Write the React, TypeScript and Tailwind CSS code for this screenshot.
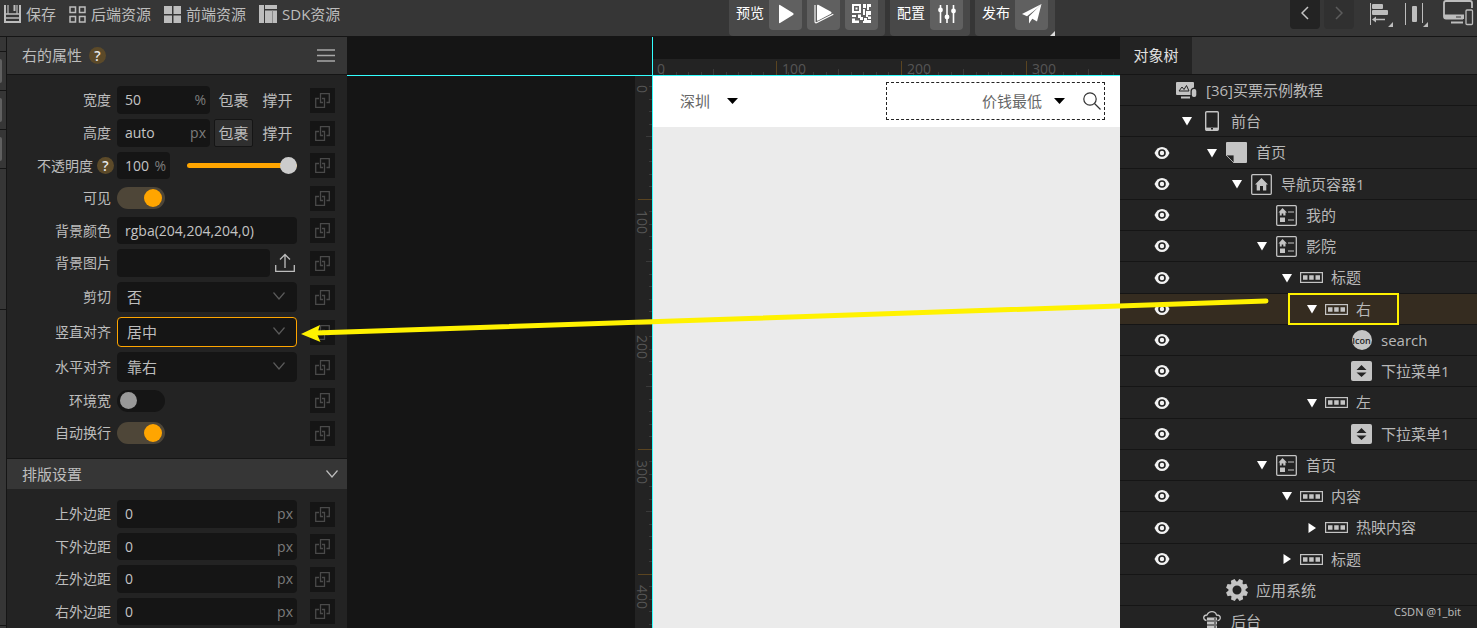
import { useState } from "react";
import type { ReactNode } from "react";
import clsx from "clsx";

type IconProps = { className?: string };

/* ---------- toolbar icons ---------- */

const SaveIcon = () => (
  <svg viewBox="0 0 17 18" className="h-[18px] w-[17px]" fill="none" stroke="currentColor">
    <path d="M1 0V17H16V0" strokeWidth="2" />
    <path d="M1 9H16M1 13H16" strokeWidth="1.500" />
    <path d="M4 0V9M13 0V9" strokeWidth="1.200" />
    <path d="M10.500 0V6" strokeWidth="2" />
  </svg>
);

const GridOutlineIcon = () => (
  <svg viewBox="0 0 17 17" className="size-[17px]" fill="none" stroke="currentColor" strokeWidth="1.5">
    <rect x="1" y="1" width="5.5" height="5.5" />
    <rect x="10.5" y="1" width="5.5" height="5.5" />
    <rect x="1" y="10.5" width="5.5" height="5.5" />
    <rect x="10.5" y="10.5" width="5.5" height="5.5" />
  </svg>
);

const GridSolidIcon = () => (
  <svg viewBox="0 0 17 17" className="size-[17px]" fill="currentColor">
    <path d="M0 0h8v8H0zM9.500 0H17v8H9.500zM0 9.500h8V17H0zM9.500 9.500H17V17H9.500z" />
  </svg>
);

const SdkIcon = () => (
  <svg viewBox="0 0 18 18" className="size-[18px]" fill="currentColor">
    <path d="M0 0h5v18H0zM6 0h12v4H6zM6 5.500h12V18H6z" />
    <path d="M13.500 5.500V18" stroke="#8a8a8a" />
  </svg>
);

const PlayIcon = () => (
  <svg viewBox="0 0 18 20" className="h-5 w-[18px]" fill="currentColor">
    <path d="M2 1.500Q2 .5 3 1L16 9Q17.500 10 16 11L3 19Q2 19.500 2 18.500z" />
  </svg>
);

const PlayStackIcon = () => (
  <svg viewBox="0 0 20 20" className="size-5" fill="none" stroke="currentColor">
    <path d="M3 1.500Q3 .3 4.200 .8L17 7.800Q18.300 8.800 17 9.800L4.200 16.500Q3 17 3 15.800z" fill="currentColor" stroke="none" />
    <path d="M1 1V17.500Q1 19.200 2.500 18.800L19.300 10.200" strokeWidth="1.100" />
  </svg>
);

const QrIcon = () => (
  <svg viewBox="0 0 19 19" className="size-[19px]" fill="currentColor">
    <path fillRule="evenodd" d="M0 0h9v9H0zM2 2v5h5V2z" />
    <path d="M3.500 3.500h2v2h-2zM11 0h3v4h-3zM15 0h4v3h-2v3h-2zM11 5h2v6h-2zM14 7h5v4h-3v2h-2zM0 11h4v2H0zM6 10.500h3V13h2v3H8v-2H6zM0 14.500h3v2h4V19H0zM12 14h3v2h4v3h-8v-2h1zM16 12.500h3V15h-3z" />
  </svg>
);

const SlidersIcon = () => (
  <svg viewBox="0 0 18 18" className="size-[18px]" fill="currentColor" stroke="currentColor" strokeWidth="1.600">
    <path d="M2.500 0V18M9 0V18M15.500 0V18" />
    <circle cx="2.500" cy="5" r="1.600" />
    <circle cx="9" cy="12" r="1.600" />
    <circle cx="15.500" cy="6" r="1.600" />
  </svg>
);

const PlaneIcon = () => (
  <svg viewBox="0 0 20 20" className="size-5" fill="currentColor">
    <path d="M19.500 0L0 10l5 2.200L15.500 4z" />
    <path d="M19.500 0L7 12.500V19.500l3.300-4.800L15 17.500z" />
  </svg>
);

const AlignIcon = () => (
  <svg viewBox="0 0 24 26" className="h-[26px] w-6" fill="currentColor">
    <path d="M0 2h1v22H0z" />
    <rect x="2" y="3" width="11" height="5" rx="1" />
    <rect x="2" y="9" width="16" height="5" rx="1" />
    <path d="M2 18.500l4-3v2.300h9v1.500H6v2.200zM23 21v5h-5z" />
  </svg>
);

const DistributeIcon = () => (
  <svg viewBox="0 0 24 26" className="h-[26px] w-6" fill="currentColor">
    <path d="M0 2h1v22H0zM17 2h1v20h-1z" />
    <rect x="7" y="5" width="5" height="16" rx="1" />
    <path d="M23 21v5h-5z" />
  </svg>
);

const DevicesIcon = () => (
  <svg viewBox="0 0 32 26" className="h-[26px] w-8" fill="none" stroke="currentColor">
    <path d="M20 18.500H3Q1 18.500 1 16.500V3Q1 1 3 1H27Q29 1 29 3V8" strokeWidth="1.800" />
    <path d="M1 14.500H21V19H1z" fill="currentColor" stroke="none" />
    <path d="M13 17h5" stroke="#363636" />
    <path d="M8 22.500H20" strokeWidth="2" />
    <rect x="23" y="10" width="6.500" height="14.500" rx="1" strokeWidth="1.300" />
  </svg>
);

/* ---------- panel icons ---------- */

const LinkIcon = () => (
  <svg viewBox="0 0 15 15" className="size-[15px]" fill="none" stroke="currentColor" strokeWidth="1.300">
    <path d="M4 5.500H.7V14.300H9.500V5.500H7" />
    <path d="M8 9.500H5.500V.7H14.300V9.500H11.500" />
  </svg>
);

const ChevronDown = ({ className }: IconProps) => (
  <svg viewBox="0 0 12 8" className={className} fill="none" stroke="currentColor" strokeWidth="1.200">
    <path d="M.5 .5L6 7L11.500 .5" />
  </svg>
);

const UploadIcon = () => (
  <svg viewBox="0 0 20 20" className="size-5" fill="none" stroke="currentColor" strokeWidth="1.300">
    <path d="M.7 12V18.300H19.300V12M10 15V1.500M5 6.500L10 1.500L15 6.500" />
  </svg>
);

const Help = () => (
  <button
    type="button"
    aria-label="帮助"
    className="flex size-[17px] shrink-0 items-center justify-center rounded-full bg-[#5c4a29] text-sm leading-none font-semibold text-[#e8e8e8]"
  >
    ?
  </button>
);

/* ---------- tree icons ---------- */

const EyeIcon = () => (
  <svg viewBox="0 0 16 12" className="h-3 w-4">
    <path d="M8 0Q13 0 15.500 6Q13 12 8 12Q3 12 .5 6Q3 0 8 0z" fill="#f2f2f2" />
    <circle cx="8" cy="6" r="3" fill="#f2f2f2" stroke="#232323" strokeWidth="1.600" />
  </svg>
);

const ProjectIcon = () => (
  <svg viewBox="0 0 21 17" className="h-[17px] w-[21px]" fill="currentColor">
    <path d="M1 0H17Q18 0 18 1V5.500Q14.500 6 14.500 9V13H1Q0 13 0 12V1Q0 0 1 0z" />
    <path d="M3 9L6 5L8 7.500L10.500 3.500L13 9z" fill="none" stroke="#232323" />
    <path d="M5 14.500H14V16.500H5z" />
    <rect x="15.800" y="7" width="4.500" height="8" rx="2" />
  </svg>
);

const PhoneIcon = () => (
  <svg viewBox="0 0 14 20" className="h-5 w-3.5" fill="none" stroke="currentColor">
    <rect x=".7" y=".7" width="12.600" height="18.600" rx="1" strokeWidth="1.400" />
    <path d="M1 17.800H13" strokeWidth="2.400" />
    <path d="M6 17.800H8" stroke="#232323" strokeWidth="1.500" />
  </svg>
);

const PageIcon = () => (
  <svg viewBox="0 0 21 21" className="size-[21px]" fill="currentColor">
    <path d="M1 0H20Q21 0 21 1V20Q21 21 20 21H8V13H0V1Q0 0 1 0z" />
    <path d="M1 13.500L8 20.500V13z" fill="#232323" />
    <path d="M0 13L8 21V13z" fill="none" stroke="currentColor" strokeWidth=".8" />
  </svg>
);

const NavIcon = () => (
  <svg viewBox="0 0 21 21" className="size-[21px]" fill="currentColor">
    <rect x=".7" y=".7" width="19.600" height="19.600" rx="1" fill="none" stroke="currentColor" strokeWidth="1.300" />
    <path d="M10.500 4L17 10.500H15.300V16.500H12V12H9V16.500H5.700V10.500H4z" />
  </svg>
);

const NavPageIcon = () => (
  <svg viewBox="0 0 21 21" className="size-[21px]" fill="currentColor">
    <rect x=".7" y=".7" width="19.600" height="19.600" rx="1" fill="none" stroke="currentColor" strokeWidth="1.300" />
    <path d="M6.500 3L11 7.500H9.500V10.500H7.300V8.500H5.700V10.500H3.800V7.500H2.500zM4 12.500H9V17H4z" />
    <path d="M12 7H18M12 15H18" stroke="#8f8f8f" strokeWidth="1.300" />
  </svg>
);

const RowIcon = () => (
  <svg viewBox="0 0 23 11" className="h-[11px] w-[23px]" fill="currentColor">
    <rect x=".6" y=".6" width="21.800" height="9.800" fill="none" stroke="currentColor" strokeWidth="1.200" />
    <path d="M3 3.300H7.500V7.700H3zM9.200 3.300H13.700V7.700H9.200zM15.500 3.300H20V7.700H15.500z" />
  </svg>
);

const IconIcon = () => (
  <span className="flex size-5 items-center justify-center rounded-full bg-[#c4c4c4] text-[9px] leading-none font-semibold text-[#232323]">
    Icon
  </span>
);

const SelectIcon = () => (
  <svg viewBox="0 0 21 20" className="h-5 w-[21px]">
    <rect width="21" height="20" rx="2" fill="currentColor" />
    <path d="M10.500 4L15.500 9H5.500zM10.500 16L15.500 11.500H5.500z" fill="#232323" />
  </svg>
);

const GearIcon = () => (
  <svg viewBox="0 0 22 22" className="size-[22px]">
    <circle cx="11" cy="11" r="6.500" fill="none" stroke="currentColor" strokeWidth="4" />
    {[22, 67, 112, 157, 202, 247, 292, 337].map((a) => (
      <path key={a} d="M8.200 3.500L9 0H13L13.800 3.500z" fill="currentColor" transform={`rotate(${a} 11 11)`} />
    ))}
  </svg>
);

const ServerIcon = () => (
  <svg viewBox="0 0 18 20" className="h-5 w-[18px]" fill="none" stroke="currentColor">
    <path d="M3.500 9.500Q.7 9 .7 6.500Q1 4 4 4Q5.500 .7 9 .7Q12.500 .7 13.500 4Q17.300 4 17.300 7Q17 9.500 14.500 9.500" strokeWidth="1.300" />
    <path d="M4 8H14M4 12H14M4 16H14" strokeWidth="3" />
    <path d="M11 8h2M11 12h2M11 16h2" stroke="#232323" />
  </svg>
);

/* ---------- toolbar ---------- */

const ResourceButton = ({ icon, label }: { icon: ReactNode; label: string }) => (
  <button type="button" className="flex items-center gap-[5px] whitespace-nowrap">
    {icon}
    {label}
  </button>
);

const ToolGroup = ({ label, children }: { label: string; children: ReactNode }) => (
  <div className="flex h-full items-start gap-[5px] rounded-b-sm bg-[#484848] px-[7px] text-white">
    <span className="text-sm leading-[26px] whitespace-nowrap">{label}</span>
    {children}
  </div>
);

const ToolButton = ({ label, children }: { label: string; children: ReactNode }) => (
  <button
    type="button"
    aria-label={label}
    className="flex h-[30px] w-[33px] items-center justify-center rounded-b-sm bg-[#606060] pb-[3px]"
  >
    {children}
  </button>
);

const Toolbar = () => (
  <header className="flex h-[37px] shrink-0 border-b border-[#151515] bg-[#363636] text-[#bdbdbd]">
    <div className="flex flex-1 items-center gap-[13px] pb-2 pl-1 text-[15px]">
      <ResourceButton icon={<SaveIcon />} label="保存" />
      <ResourceButton icon={<GridOutlineIcon />} label="后端资源" />
      <ResourceButton icon={<GridSolidIcon />} label="前端资源" />
      <ResourceButton icon={<SdkIcon />} label="SDK资源" />
    </div>
    <div className="relative flex gap-[5px]">
      <ToolGroup label="预览">
        <ToolButton label="播放"><PlayIcon /></ToolButton>
        <ToolButton label="连续播放"><PlayStackIcon /></ToolButton>
        <ToolButton label="二维码"><QrIcon /></ToolButton>
      </ToolGroup>
      <ToolGroup label="配置">
        <ToolButton label="设置"><SlidersIcon /></ToolButton>
      </ToolGroup>
      <ToolGroup label="发布">
        <ToolButton label="发送"><PlaneIcon /></ToolButton>
      </ToolGroup>
      <svg viewBox="0 0 5 5" className="absolute right-0 bottom-0 size-[5px]" fill="#dddddd">
        <path d="M5 0V5H0z" />
      </svg>
    </div>
    <div className="flex w-[422px] items-start justify-end pr-0.5">
      <button type="button" aria-label="后退" className="mr-1 flex h-[29px] w-[30px] items-center justify-center rounded-b-sm bg-[#232323] pb-1">
        <svg viewBox="0 0 8 14" className="h-3.5 w-2" fill="none" stroke="#c4c4c4" strokeWidth="1.500">
          <path d="M7 1L1 7L7 13" />
        </svg>
      </button>
      <button type="button" aria-label="前进" className="mr-4 flex h-[29px] w-[30px] items-center justify-center rounded-b-sm bg-[#303030] pb-1">
        <svg viewBox="0 0 8 14" className="h-3.5 w-2" fill="none" stroke="#5c5c5c" strokeWidth="1.500">
          <path d="M1 1L7 7L1 13" />
        </svg>
      </button>
      <button type="button" aria-label="对齐" className="mr-[11px] pt-px"><AlignIcon /></button>
      <button type="button" aria-label="分布" className="mr-3.5 pt-px"><DistributeIcon /></button>
      <button type="button" aria-label="设备"><DevicesIcon /></button>
    </div>
  </header>
);

/* ---------- property panel ---------- */

type PropertyRowProps = {
  id: string;
  label: string;
  help?: boolean;
  height?: string;
  children: ReactNode;
};

const PropertyRow = ({ id, label, help, height = "h-7", children }: PropertyRowProps) => (
  <div className={clsx("flex items-center", height)}>
    <div className={clsx("flex w-[110px] shrink-0 items-center justify-end gap-1", help ? "pr-[3px]" : "pr-1.5")}>
      <label htmlFor={id} className="text-sm whitespace-nowrap">{label}</label>
      {help && <Help />}
    </div>
    <div className="flex h-full min-w-0 flex-1 items-center">{children}</div>
    <button
      type="button"
      aria-label={`绑定${label}`}
      className="mr-3 ml-[13px] flex size-[25px] shrink-0 items-center justify-center bg-[#151515] text-[#4a4a4a]"
    >
      <LinkIcon />
    </button>
  </div>
);

const TextField = ({ id, value, unit, width = "flex-1" }: { id: string; value: string; unit?: string; width?: string }) => (
  <div className={clsx("flex h-full min-w-0 items-center rounded-sm bg-[#151515] pr-1 pl-2", width)}>
    <input id={id} defaultValue={value} className="w-full min-w-0 flex-1 bg-transparent text-sm text-[#c4c4c4] outline-none" />
    {unit && <span className="text-sm text-[#7c7c7c]">{unit}</span>}
  </div>
);

const SizeButtons = ({ wrapActive }: { wrapActive?: boolean }) => (
  <div className="ml-1 flex h-full shrink-0 gap-[5px] text-[15px]">
    <button
      type="button"
      className={clsx("w-[39px] rounded-xs border", wrapActive ? "border-[#151515] bg-[#2f2f2f]" : "border-transparent")}
    >
      包裹
    </button>
    <button type="button" className="w-[39px]">撑开</button>
  </div>
);

const SelectField = ({ id, options, active }: { id: string; options: string[]; active?: boolean }) => (
  <div className="relative h-full flex-1">
    <select
      id={id}
      className={clsx(
        "h-full w-full appearance-none rounded-sm border bg-[#151515] pl-[9px] text-[15px] outline-none",
        active ? "border-[#ffa500]" : "border-[#151515]"
      )}
    >
      {options.map((o) => (
        <option key={o}>{o}</option>
      ))}
    </select>
    <ChevronDown className="pointer-events-none absolute top-[10px] right-3 h-2 w-3 text-[#5a5a5a]" />
  </div>
);

const Switch = ({ id, on }: { id: string; on?: boolean }) => (
  <input
    id={id}
    type="checkbox"
    role="switch"
    defaultChecked={on}
    className="flex h-[22px] w-12 appearance-none items-center rounded-full bg-[#151515] px-[3px] before:size-[17px] before:rounded-full before:bg-[#999999] checked:justify-end checked:bg-[#4e4638] checked:before:size-[18px] checked:before:bg-[#ffa500]"
  />
);

const margins = [
  { id: "margin-top", label: "上外边距" },
  { id: "margin-bottom", label: "下外边距" },
  { id: "margin-left", label: "左外边距" },
  { id: "margin-right", label: "右外边距" },
];

const PropertyPanel = () => {
  const [opacity, setOpacity] = useState(100);

  return (
    <aside className="w-[340px] shrink-0 bg-[#232323] text-[#bdbdbd]">
      <div className="flex h-[38px] items-center gap-[7px] border-b border-[#151515] bg-[#363636] pr-3 pl-[15px]">
        <h2 className="text-[15px]">右的属性</h2>
        <Help />
        <button type="button" aria-label="菜单" className="ml-auto">
          <svg viewBox="0 0 18 13" className="h-[13px] w-[18px]" stroke="#a8a8a8" strokeWidth="1.300">
            <path d="M0 1H18M0 6.500H18M0 12H18" />
          </svg>
        </button>
      </div>
      <div className="flex flex-col gap-[5px] py-[11px]">
        <PropertyRow id="width" label="宽度">
          <TextField id="width" value="50" unit="%" />
          <SizeButtons />
        </PropertyRow>
        <PropertyRow id="height" label="高度">
          <TextField id="height" value="auto" unit="px" />
          <SizeButtons wrapActive />
        </PropertyRow>
        <PropertyRow id="opacity" label="不透明度" help height="h-[27px]">
          <TextField id="opacity" value={String(opacity)} unit="%" width="w-[53px] shrink-0" />
          <input
            type="range"
            aria-label="不透明度"
            value={opacity}
            onChange={(e) => setOpacity(Number(e.target.value))}
            className="ml-[17px] h-[17px] min-w-0 flex-1 appearance-none bg-transparent [&::-webkit-slider-runnable-track]:h-[5px] [&::-webkit-slider-runnable-track]:rounded-full [&::-webkit-slider-runnable-track]:bg-[#ffa500] [&::-webkit-slider-thumb]:-mt-1.5 [&::-webkit-slider-thumb]:size-[17px] [&::-webkit-slider-thumb]:appearance-none [&::-webkit-slider-thumb]:rounded-full [&::-webkit-slider-thumb]:bg-[#cccccc]"
          />
        </PropertyRow>
        <PropertyRow id="visible" label="可见">
          <Switch id="visible" on />
        </PropertyRow>
        <PropertyRow id="bg-color" label="背景颜色" height="h-[27px]">
          <TextField id="bg-color" value="rgba(204,204,204,0)" />
        </PropertyRow>
        <PropertyRow id="bg-image" label="背景图片">
          <TextField id="bg-image" value="" />
          <button type="button" aria-label="上传" className="ml-[5px] pr-0.5">
            <UploadIcon />
          </button>
        </PropertyRow>
        <PropertyRow id="overflow" label="剪切" height="h-[30px]">
          <SelectField id="overflow" options={["否", "是"]} />
        </PropertyRow>
        <PropertyRow id="v-align" label="竖直对齐" height="h-[30px]">
          <SelectField id="v-align" options={["居中", "靠上", "靠下"]} active />
        </PropertyRow>
        <PropertyRow id="h-align" label="水平对齐" height="h-[30px]">
          <SelectField id="h-align" options={["靠右", "靠左", "居中"]} />
        </PropertyRow>
        <PropertyRow id="surround" label="环境宽" height="h-[27px]">
          <Switch id="surround" />
        </PropertyRow>
        <PropertyRow id="auto-wrap" label="自动换行">
          <Switch id="auto-wrap" on />
        </PropertyRow>
      </div>
      <div className="flex h-[31px] items-center justify-between border-t border-[#151515] bg-[#363636] pr-[9px] pl-[15px]">
        <h2 className="text-[15px]">排版设置</h2>
        <ChevronDown className="h-2 w-3" />
      </div>
      <div className="flex flex-col gap-[5px] py-[11px]">
        {margins.map((m, i) => (
          <PropertyRow key={m.id} id={m.id} label={m.label} height={i % 2 ? "h-[27px]" : "h-7"}>
            <TextField id={m.id} value="0" unit="px" />
          </PropertyRow>
        ))}
      </div>
    </aside>
  );
};

/* ---------- canvas ---------- */

// 100 design units are drawn as 125px, with a tick every 10 units
const STEP = 125;
const ticks = Array.from({ length: 160 }, (_, i) => i + 1);

const tickColor = (i: number) => (i % 10 === 0 ? "#5a4420" : "#3a3a3a");
const tickLength = (i: number) => {
  if (i % 10 === 0) return 14;
  return i % 5 === 0 ? 6 : 3;
};

const HorizontalRuler = () => (
  <svg className="h-4 w-full bg-[#232323]" shapeRendering="crispEdges">
    {ticks.map((i) => (
      <rect key={i} x={Math.floor((i * STEP) / 10) - 2} y={16 - tickLength(i)} width="1" height={tickLength(i)} fill={tickColor(i)} />
    ))}
    {[0, 1, 2, 3].map((n) => (
      <text key={n} x={n * STEP + 4} y="15" fontSize="14" fill="#555555">
        {n * 100}
      </text>
    ))}
  </svg>
);

const VerticalRuler = () => (
  <svg className="h-full w-[17px] bg-[#232323]" shapeRendering="crispEdges">
    {ticks.map((i) => (
      <rect key={i} x={17 - tickLength(i)} y={Math.floor((i * STEP) / 10) - 2} width={tickLength(i)} height="1" fill={tickColor(i)} />
    ))}
    {[0, 1, 2, 3, 4].map((n) => (
      <text key={n} transform={`translate(2 ${n * STEP + 9}) rotate(90)`} fontSize="14" fill="#555555">
        {n * 100}
      </text>
    ))}
  </svg>
);

const Caret = () => (
  <svg viewBox="0 0 11 6" className="h-1.5 w-[11px]" fill="#000000">
    <path d="M0 0H11L5.500 6z" />
  </svg>
);

const Canvas = () => (
  <main className="flex min-w-0 flex-1 bg-[#151515]">
    <div className="flex w-[305px] shrink-0 flex-col">
      <div className="h-[39px] border-b border-[#33ffff]" />
      <div className="flex min-h-0 flex-1 justify-end">
        <VerticalRuler />
      </div>
    </div>
    <div className="flex min-w-0 flex-1 flex-col border-l border-[#33ffff]">
      <div className="flex h-[39px] items-end border-b border-[#33ffff]">
        <HorizontalRuler />
      </div>
      <div className="flex-1 bg-[#ebebeb] text-[15px] text-[#666666]">
        <div className="flex h-[51px] items-center justify-between bg-white pr-[15px] pb-px pl-[27px]">
          <button type="button" className="flex items-center gap-[17px]">
            深圳
            <Caret />
          </button>
          <div className="flex h-[38px] w-[219px] items-center justify-end border border-dashed border-[#222222] pr-[3px]">
            <button type="button" className="mr-[18px] flex items-center gap-3">
              价钱最低
              <Caret />
            </button>
            <button type="button" aria-label="搜索">
              <svg viewBox="0 0 18 18" className="size-[18px]" fill="none" stroke="#333333" strokeWidth="1.200">
                <circle cx="7" cy="7" r="6.200" />
                <path d="M11.500 11.500L17.500 17.500" />
              </svg>
            </button>
          </div>
        </div>
      </div>
    </div>
  </main>
);

/* ---------- object tree ---------- */

type TreeNode = {
  label: string;
  level: number;
  icon: ReactNode;
  state?: "open" | "closed";
  eye?: boolean;
  selected?: boolean;
};

const nodes: TreeNode[] = [
  { label: "[36]买票示例教程", level: 0, icon: <ProjectIcon /> },
  { label: "前台", level: 1, icon: <PhoneIcon />, state: "open" },
  { label: "首页", level: 2, icon: <PageIcon />, state: "open", eye: true },
  { label: "导航页容器1", level: 3, icon: <NavIcon />, state: "open", eye: true },
  { label: "我的", level: 4, icon: <NavPageIcon />, eye: true },
  { label: "影院", level: 4, icon: <NavPageIcon />, state: "open", eye: true },
  { label: "标题", level: 5, icon: <RowIcon />, state: "open", eye: true },
  { label: "右", level: 6, icon: <RowIcon />, state: "open", eye: true, selected: true },
  { label: "search", level: 7, icon: <IconIcon />, eye: true },
  { label: "下拉菜单1", level: 7, icon: <SelectIcon />, eye: true },
  { label: "左", level: 6, icon: <RowIcon />, state: "open", eye: true },
  { label: "下拉菜单1", level: 7, icon: <SelectIcon />, eye: true },
  { label: "首页", level: 4, icon: <NavPageIcon />, state: "open", eye: true },
  { label: "内容", level: 5, icon: <RowIcon />, state: "open", eye: true },
  { label: "热映内容", level: 6, icon: <RowIcon />, state: "closed", eye: true },
  { label: "标题", level: 5, icon: <RowIcon />, state: "closed", eye: true },
  { label: "应用系统", level: 2, icon: <GearIcon /> },
  { label: "后台", level: 1, icon: <ServerIcon /> },
];

const TreeRow = ({ node }: { node: TreeNode }) => (
  <li
    className={clsx(
      "relative flex h-[31px] items-center border-b border-[#151515] pl-[29px] nth-[4n+3]:h-8",
      node.selected && "bg-[#352c20]"
    )}
  >
    <span className="flex w-[25px] justify-center">
      {node.eye && (
        <button type="button" aria-label="显示或隐藏">
          <EyeIcon />
        </button>
      )}
    </span>
    <div className="flex items-center" style={{ paddingLeft: Math.max(node.level - 1, 0) * 25 }}>
      {node.level > 0 && (
        <span className="flex w-[25px] justify-center">
          {node.state && (
            <button type="button" aria-label="展开或收起">
              <svg viewBox="0 0 10 10" className="size-2.5" fill="#ffffff">
                <path d={node.state === "open" ? "M0 1H10L5 9.500z" : "M1.500 0V10L9 5z"} />
              </svg>
            </button>
          )}
        </span>
      )}
      <span className="mr-[7px] flex w-[25px] justify-center text-[#c4c4c4]">{node.icon}</span>
      <span className="whitespace-nowrap">{node.label}</span>
    </div>
    {/* highlight frame around the node that is being explained */}
    {node.selected && (
      <span className="absolute -top-px -bottom-px left-[168px] w-[111px] border-2 border-[#fff200]" />
    )}
  </li>
);

const ObjectTree = () => (
  <aside className="w-[357px] shrink-0 bg-[#232323] text-[15px] text-[#b8b8b8]">
    <div className="flex h-[38px] border-b border-[#151515] bg-[#363636]">
      <h2 className="flex w-[72px] items-center justify-center bg-[#232323] text-[#e0e0e0]">对象树</h2>
    </div>
    <ul>
      {nodes.map((node, i) => (
        <TreeRow key={i} node={node} />
      ))}
    </ul>
  </aside>
);

const SideRail = () => (
  <nav className="w-[7px] shrink-0 border-r border-[#151515] bg-[#363636]">
    <div className="h-[15px] border-b border-[#151515]" />
    {[0, 1, 2].map((i) => (
      <div key={i} className="flex h-[39px] items-center border-b border-[#151515]">
        <span className="h-6 w-0.5 rounded-r-sm bg-[#606060]" />
      </div>
    ))}
    <div className="h-[141px] border-b border-[#151515]" />
    <div className="h-[316px] border-b border-[#151515]" />
  </nav>
);

// the arrow runs from the selected tree node to the align field
const Arrow = () => (
  <div className="pointer-events-none absolute top-[260px] right-[211px] left-[301px]">
    <svg className="h-12 w-full overflow-visible" fill="#fff200">
      <line x1="14" y1="36" x2="100%" y2="4" stroke="#fff200" strokeWidth="5" strokeLinecap="round" />
      <path d="M0 37L19 28L16 37L19.500 45z" />
    </svg>
  </div>
);

const App = () => (
  <div className="flex h-screen flex-col overflow-hidden bg-[#151515] font-['Open_Sans','Noto_Sans_CJK_SC',sans-serif]">
    <Toolbar />
    <div className="relative flex min-h-0 flex-1">
      <SideRail />
      <PropertyPanel />
      <Canvas />
      <ObjectTree />
      <Arrow />
      <span className="absolute right-4 bottom-2 font-['Noto_Sans',sans-serif] text-[11px] leading-4 text-[#b8b8b8]">
        CSDN @1_bit
      </span>
    </div>
  </div>
);

export default App;
